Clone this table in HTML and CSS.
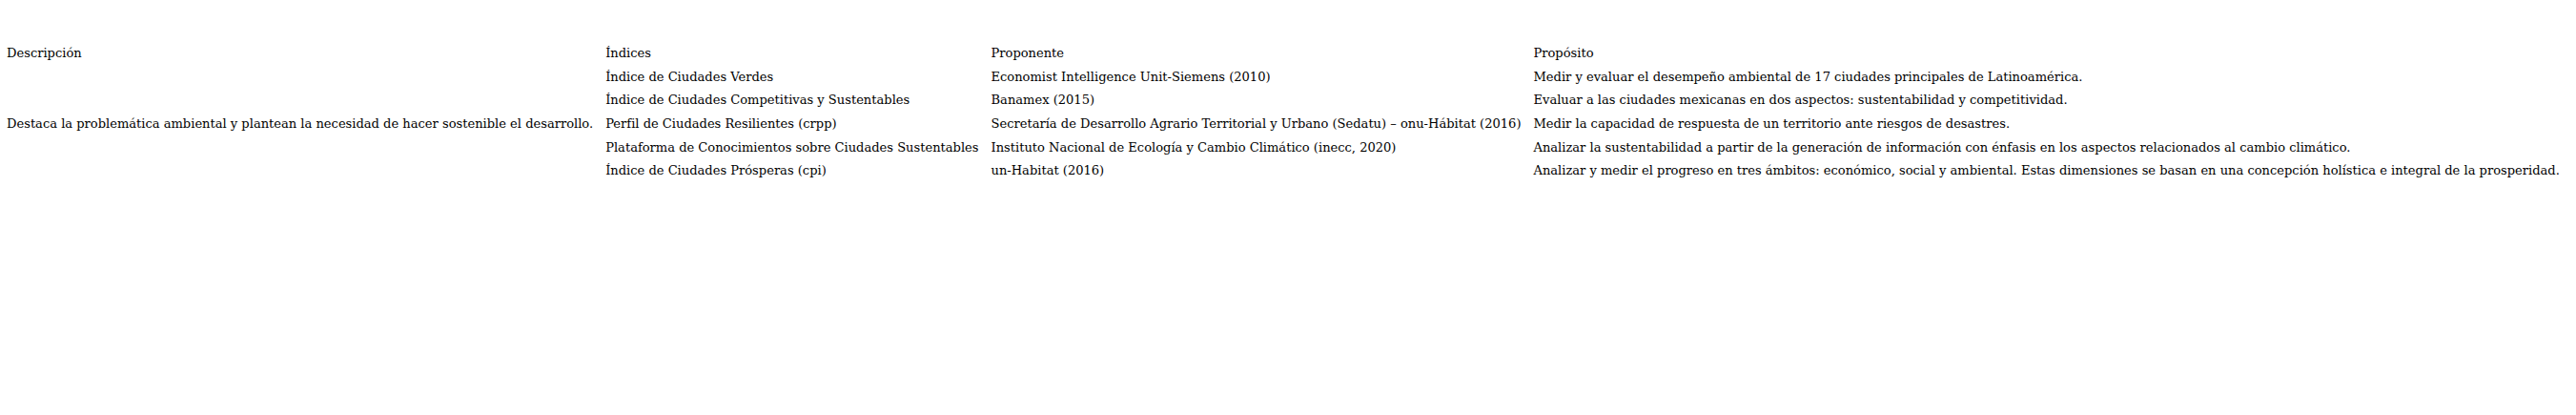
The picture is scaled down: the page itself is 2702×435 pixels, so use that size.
FILE: index.html
```html
<!DOCTYPE html>
<html lang="es">
<head>
<meta charset="utf-8">
<link rel="stylesheet" href="styles.css">
<title>Índices</title>
</head>
<body>
<table class="idx-table">
  <thead>
    <tr>
      <th>Descripción</th>
      <th>Índices</th>
      <th>Proponente</th>
      <th>Propósito</th>
    </tr>
  </thead>
  <tbody>
    <tr>
      <td rowspan="5">Destaca la problemática ambiental y plantean la necesidad de hacer sostenible el desarrollo.</td>
      <td>Índice de Ciudades Verdes</td>
      <td>Economist Intelligence Unit-Siemens (2010)</td>
      <td>Medir y evaluar el desempeño ambiental de 17 ciudades principales de Latinoamérica.</td>
    </tr>
    <tr>
      <td>Índice de Ciudades Competitivas y Sustentables</td>
      <td>Banamex (2015)</td>
      <td>Evaluar a las ciudades mexicanas en dos aspectos: sustentabilidad y competitividad.</td>
    </tr>
    <tr>
      <td>Perfil de Ciudades Resilientes (crpp)</td>
      <td>Secretaría de Desarrollo Agrario Territorial y Urbano (Sedatu) – onu-Hábitat (2016)</td>
      <td>Medir la capacidad de respuesta de un territorio ante riesgos de desastres.</td>
    </tr>
    <tr>
      <td>Plataforma de Conocimientos sobre Ciudades Sustentables</td>
      <td>Instituto Nacional de Ecología y Cambio Climático (inecc, 2020)</td>
      <td>Analizar la sustentabilidad a partir de la generación de información con énfasis en los aspectos relacionados al cambio climático.</td>
    </tr>
    <tr>
      <td>Índice de Ciudades Prósperas (cpi)</td>
      <td>un-Habitat (2016)</td>
      <td>Analizar y medir el progreso en tres ámbitos: económico, social y ambiental. Estas dimensiones se basan en una concepción holística e integral de la prosperidad.</td>
    </tr>
  </tbody>
</table>
</body>
</html>
```
FILE: styles.css
```css
html, body {
  margin: 0;
  padding: 0;
  background: #ffffff;
}
body {
  font-family: "DejaVu Serif", serif;
  font-size: 13.05px;
  color: #000000;
}
.idx-table {
  margin-top: 44px;
  border-collapse: collapse;
  white-space: nowrap;
}
.idx-table th,
.idx-table td {
  font-weight: normal;
  text-align: left;
  vertical-align: middle;
  line-height: 24.67px;
  padding: 0 6px 0 7px;
}
```
